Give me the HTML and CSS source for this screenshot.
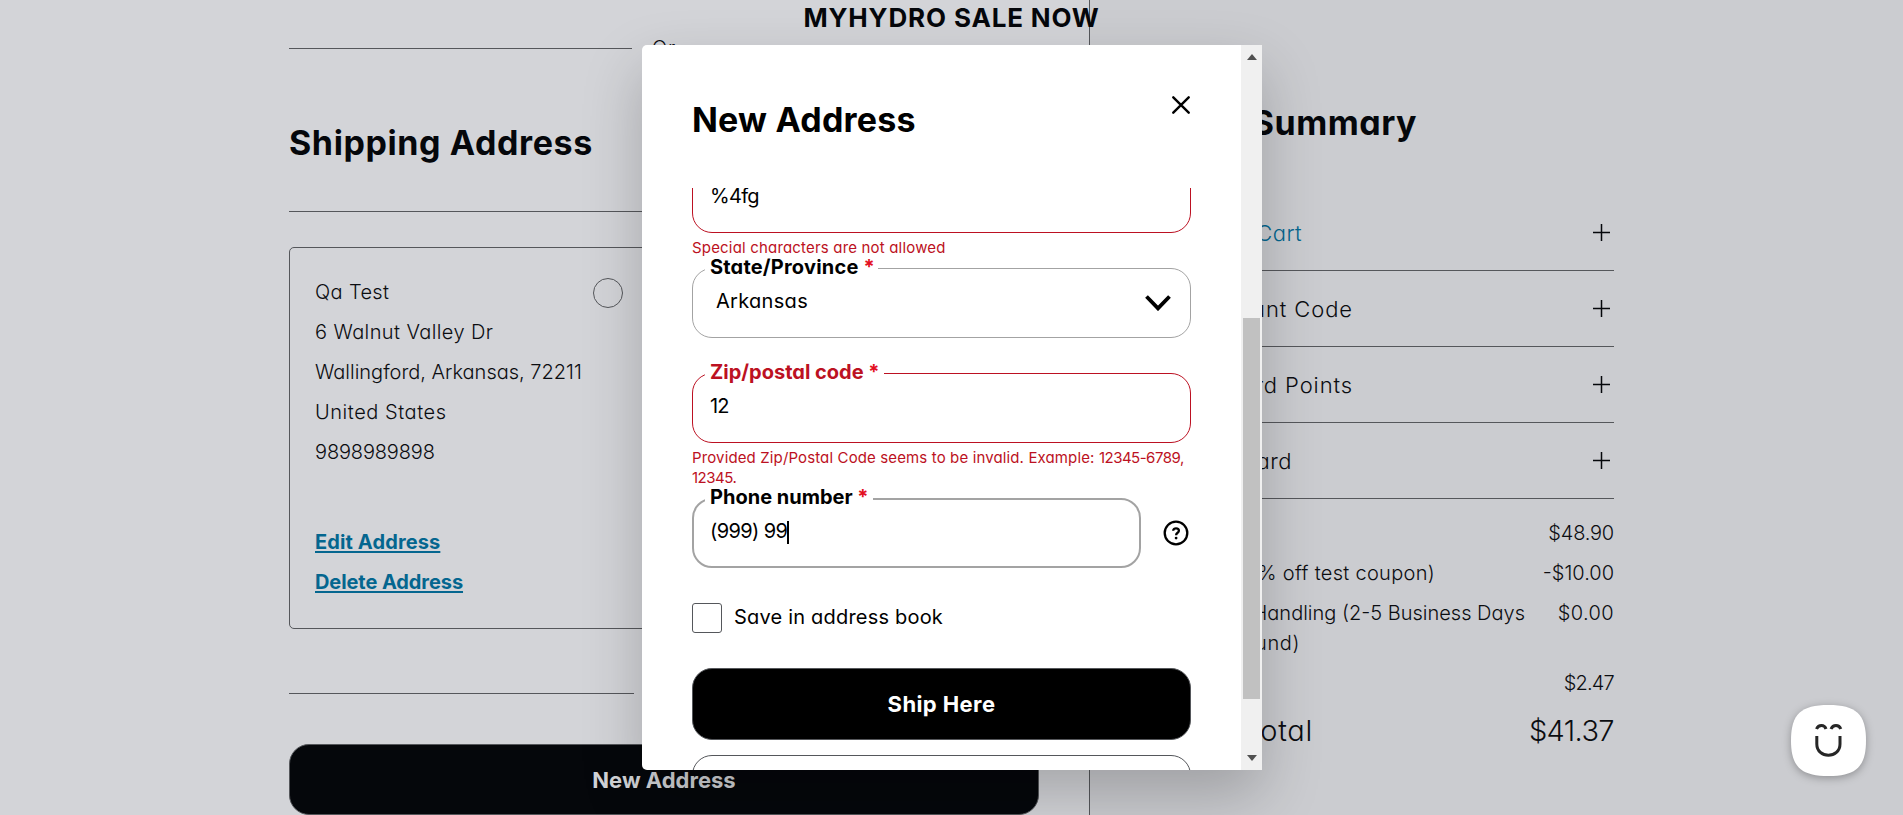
FILE: index.html
```html
<!DOCTYPE html>
<html lang="en">
<head>
<meta charset="utf-8">
<title>Checkout</title>
<link rel="stylesheet" href="styles.css">
</head>
<body>
<div class="page">
  <main class="checkout">
    <div class="divider"><span class="divider-text">Or</span></div>
    <h2 class="title shipping-title">Shipping Address</h2>
    <div class="rule"></div>
    <section class="card">
      <div class="address">
        <div class="a1">Qa Test</div>
        <div class="a2">6 Walnut Valley Dr</div>
        <div class="a3">Wallingford, Arkansas, 72211</div>
        <div class="a4">United States</div>
        <div class="a5">9898989898</div>
        <div class="links">
          <a class="link l1">Edit Address</a>
          <a class="link l2">Delete Address</a>
        </div>
      </div>
      <span class="radio"></span>
    </section>
    <div class="divider divider-low"><span class="divider-text narrow">Or</span></div>
    <button class="btn btn-new"><span>New Address</span></button>
  </main>
  <aside class="summary">
    <h2 class="title summary-title">Order Summary</h2>
    <div class="acc"><span class="acc-label w-cart">View/Edit Cart</span><svg class="plus" viewBox="0 0 17 17"><path d="M8.5 0V17M0 8.5H17"/></svg></div>
    <div class="acc"><span class="acc-label w-code">Apply Discount Code</span><svg class="plus" viewBox="0 0 17 17"><path d="M8.5 0V17M0 8.5H17"/></svg></div>
    <div class="acc"><span class="acc-label w-points">Apply Reward Points</span><svg class="plus" viewBox="0 0 17 17"><path d="M8.5 0V17M0 8.5H17"/></svg></div>
    <div class="acc"><span class="acc-label w-card">Apply Gift Card</span><svg class="plus" viewBox="0 0 17 17"><path d="M8.5 0V17M0 8.5H17"/></svg></div>
    <div class="totals">
      <div class="line"><span class="what">Subtotal</span><span class="p1">$48.90</span></div>
      <div class="line"><span class="what w-disc">Discount (20% off test coupon)</span><span class="p2">-$10.00</span></div>
      <div class="line tall"><span class="what"><span class="what w-ship">Shipping &amp; Handling (2-5 Business Days</span><span class="what w-ground">Ground)</span></span><span class="p3">$0.00</span></div>
      <div class="line"><span class="what">Tax</span><span class="p4">$2.47</span></div>
      <div class="line grand"><span class="what w-total">Order Total</span><span class="p5">$41.37</span></div>
    </div>
  </aside>
</div>

<div class="promo">MYHYDRO SALE NOW</div>

<div class="modal">
  <div class="modal-main">
    <header class="modal-head">
      <h2 class="title modal-title">New Address</h2>
      <svg class="close" viewBox="0 0 18 18"><path d="M1.300 1.300L16.700 16.700M16.700 1.300L1.300 16.700"/></svg>
    </header>
    <div class="modal-body">
      <div class="field error city"><span class="value v1">%4fg</span></div>
      <div class="msg m1">Special characters are not allowed</div>
      <div class="field state">
        <label class="label b1">State/Province <i>*</i></label>
        <span class="value v2">Arkansas</span>
        <svg class="chevron" viewBox="0 0 26 16"><path d="M1.500 1.500L13 13.400L24.500 1.500"/></svg>
      </div>
      <div class="field error zip">
        <label class="label b2">Zip/postal code <i>*</i></label>
        <span class="value v3">12</span>
      </div>
      <div class="msg m2">Provided Zip/Postal Code seems to be invalid. Example: <span class="digits">12345-6789,<br>12345.</span></div>
      <div class="phone-row">
        <div class="field focus phone">
          <label class="label b3">Phone number <i>*</i></label>
          <span class="value v4">(999) 99</span><span class="caret"></span>
        </div>
        <svg class="help" viewBox="0 0 26 26"><circle cx="13" cy="13" r="11.3"/><path d="M10.2 10.8C10.2 7.400 15.900 7.500 15.900 10.800C15.900 12.800 13.100 12.800 13.100 15.200"/><circle class="dot" cx="13.1" cy="18.1" r="1.4"/></svg>
      </div>
      <div class="save"><span class="box"></span><span class="save-text">Save in address book</span></div>
      <button class="btn btn-ship"><span>Ship Here</span></button>
      <button class="btn btn-cancel"></button>
    </div>
  </div>
  <div class="scroll">
    <svg class="arrow" viewBox="0 0 10 6"><path d="M0 6L5 0L10 6Z"/></svg>
    <div class="thumb"></div>
    <svg class="arrow" viewBox="0 0 10 6"><path d="M0 0H10L5 6Z"/></svg>
  </div>
</div>

<svg class="chat" viewBox="0 0 75 71"><path class="blob" d="M37.500 0C65 0 75 9 75 35.500C75 62 65 71 37.500 71C10 71 0 62 0 35.500C0 9 10 0 37.500 0Z"/><path class="face" d="M25.500 24C27.500 19.300 33.500 19.300 35 24M40 24C42 19.300 48 19.300 49.800 24M25.800 31V39C25.800 54 49 54 49 39V31"/></svg>
</body>
</html>
```
FILE: styles.css
```css
* { box-sizing: border-box; }
body { margin: 0; height: 815px; overflow: hidden; position: relative; font-family: Inter, "Open Sans", sans-serif; font-feature-settings: "cv11"; font-size: 20px; color: #0b0d11; background: #d3d4d8; }
.page { display: flex; height: 815px; }
.checkout { width: 1089px; padding: 28px 50px 0 289px; }
.summary { flex: 1; border-left: 1px solid #55575b; background: #cbccd0; padding: 103px 289px 0 49px; font-weight: 300; }
.title { margin: 0; font-size: 34px; line-height: 40px; font-weight: 700; color: #05070b; white-space: nowrap; }
.divider { display: flex; align-items: center; height: 40px; gap: 20px; font-weight: 300; }
.divider::before, .divider::after { content: ""; flex: 1; height: 1px; background: #55575b; }
.divider-text { width: 24px; line-height: 40px; letter-spacing: .8px; white-space: nowrap; }
.divider-text.narrow { width: 20px; }
.shipping-title { margin-top: 55px; letter-spacing: .6px; }
.rule { margin-top: 48px; height: 1px; background: #55575b; }
.card { margin-top: 35px; height: 382px; border: 1px solid #55575b; border-radius: 5px; padding: 24px 25px; display: flex; line-height: 40px; font-weight: 300; }
.address { width: 278px; white-space: nowrap; }
.a1 { letter-spacing: .35px; }
.a2 { letter-spacing: .4px; }
.a4 { letter-spacing: .55px; }
.a5 { letter-spacing: -.15px; }
.links { margin-top: 50px; display: flex; flex-direction: column; align-items: flex-start; }
.link { font-weight: 700; color: #04668f; text-decoration: underline; text-decoration-thickness: 2px; text-underline-offset: 2px; text-decoration-skip-ink: none; }
.l1 { letter-spacing: .12px; }
.l2 { letter-spacing: -.08px; }
.radio { width: 30px; height: 30px; margin-top: 6px; border: 1px solid #55575b; border-radius: 50%; }
.divider-low { margin-top: 44px; }
.btn { display: flex; align-items: center; justify-content: center; width: 100%; border: 1px solid #55575b; border-radius: 20px; font: 700 22px Inter, sans-serif; font-feature-settings: "cv11"; padding: 0; }
.btn-new { margin-top: 31px; height: 71px; background: #05070b; color: #d3d4d8; }
.summary-title { width: 278px; display: flex; justify-content: flex-end; letter-spacing: .5px; }
.summary-title + .acc { margin-top: 52px; }
.acc { display: flex; align-items: center; justify-content: space-between; height: 76px; border-bottom: 1px solid #55575b; padding-right: 4px; font-size: 22px; }
.acc-label, .what { display: flex; white-space: nowrap; }
.acc-label { justify-content: flex-end; letter-spacing: .9px; }
.w-cart { width: 163px; color: #04668f; letter-spacing: .4px; }
.w-code { width: 214px; }
.w-points { width: 214px; }
.w-card { width: 153px; letter-spacing: .5px; }
.plus { width: 17px; height: 17px; fill: none; stroke: #05070b; stroke-width: 1.5; }
.totals { padding-top: 14px; line-height: 40px; }
.line { display: flex; justify-content: space-between; }
.line.tall { line-height: 30px; padding: 5px 0; }
.line.tall > .what { flex-direction: column; }
.w-disc, .w-ship, .w-ground, .w-total { justify-content: flex-end; }
.w-disc { width: 296px; letter-spacing: .3px; }
.w-ship { width: 386px; }
.w-ground { width: 161px; letter-spacing: .6px; }
.w-total { width: 174px; letter-spacing: .7px; }
.p1 { letter-spacing: -.2px; }
.p3 { letter-spacing: .4px; }
.p4 { letter-spacing: -.8px; }
.p5 { letter-spacing: -.6px; }
.grand { line-height: 60px; margin-top: -2px; font-size: 29px; }
.promo { position: absolute; top: 0; left: 0; width: 100%; text-align: center; font-size: 26px; font-weight: 700; line-height: 35px; letter-spacing: .85px; color: #05070b; }

.modal { position: absolute; left: 642px; top: 45px; width: 620px; height: 725px; display: flex; background: #fff; border-radius: 5px 0 0 5px; box-shadow: 0 25px 60px rgba(0,0,0,.22); color: #000; }
.modal-main { width: 599px; padding: 0 50px; }
.modal-head { height: 143px; display: flex; justify-content: space-between; }
.modal-title { margin-top: 55px; color: #000; letter-spacing: .2px; }
.close { width: 18px; height: 18px; margin: 51px 1px 0 0; fill: none; stroke: #000; stroke-width: 2.4; stroke-linecap: round; }
.modal-body { height: 582px; overflow: hidden; }
.field { position: relative; height: 70px; border: 1px solid #a3a3a3; border-radius: 20px; padding: 17px 18px 0 17px; line-height: 30px; display: flex; }
.field.error { border-color: #bc1122; }
.field.focus { border: 2px solid #a3a3a3; padding: 16px 17px 0 16px; }
.city { margin-top: -25px; }
.state { margin-top: 10px; padding-left: 23px; padding-right: 19px; justify-content: space-between; }
.zip { margin-top: 35px; }
.v1 { letter-spacing: -.7px; }
.v2 { letter-spacing: .3px; }
.v3 { letter-spacing: -1px; }
.v4 { letter-spacing: -.6px; }
.label { position: absolute; left: 12px; top: -14px; height: 22px; line-height: 24px; padding: 0 4px 0 5px; background: #fff; font-weight: 700; white-space: nowrap; }
.label i { font-style: normal; color: #e3101f; }
.b1 { letter-spacing: .2px; padding-right: 3px; }
.error .label { color: #bc1122; }
.error .label i { color: #e3101f; }
.focus .label { left: 11px; top: -15px; }
.msg { margin-top: 5px; font-size: 15px; line-height: 20px; color: #bc1122; white-space: nowrap; }
.m1 { letter-spacing: .18px; }
.m2 { letter-spacing: .13px; }
.digits { letter-spacing: -.5px; }
.chevron { width: 26px; height: 16px; margin-top: 9px; fill: none; stroke: #000; stroke-width: 3.8; }
.phone-row { margin-top: 10px; display: flex; align-items: center; justify-content: space-between; }
.phone { width: 449px; }
.caret { width: 2px; height: 23px; margin-top: 5px; background: #000; }
.help { width: 26px; height: 26px; margin-right: 2px; fill: none; stroke: #000; stroke-width: 2.3; }
.help .dot { fill: #000; stroke: none; }
.save { margin-top: 35px; height: 30px; display: flex; gap: 12px; line-height: 29px; letter-spacing: .2px; }
.box { width: 30px; height: 30px; border: 1px solid #55575b; border-radius: 3px; }
.btn-ship { margin-top: 35px; height: 72px; background: #000; color: #fff; letter-spacing: .4px; }
.btn-cancel { margin-top: 15px; height: 72px; background: #fff; }
.scroll { width: 21px; background: #f0f0f0; display: flex; flex-direction: column; align-items: center; padding: 9px 0; }
.arrow { width: 10px; height: 6px; fill: #505050; }
.thumb { width: 17px; height: 382px; margin: 258px 0 56px; background: #c1c1c1; }
.chat { position: absolute; left: 1791px; top: 705px; width: 75px; height: 71px; overflow: visible; filter: drop-shadow(0 2px 4px rgba(0,0,0,.3)); }
.blob { fill: #fff; }
.face { fill: none; stroke: #262626; stroke-width: 3; }
```
